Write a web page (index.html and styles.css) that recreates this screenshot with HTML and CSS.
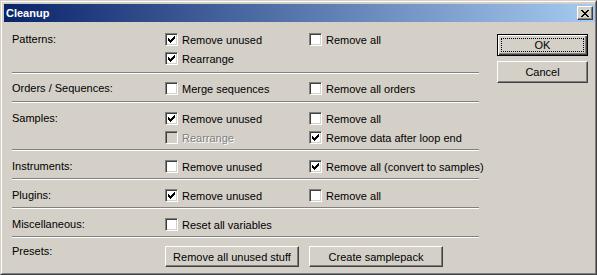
FILE: index.html
```html
<!DOCTYPE html>
<html lang="en">
<head>
    <meta charset="UTF-8">
    <title>Cleanup</title>
    <link rel="stylesheet" href="styles.css">
</head>
<body>
    <div class="window">
        <div class="frame">
            <div class="titlebar">
                <span class="title">Cleanup</span>
                <span class="close">
                    <svg width="8" height="7" viewBox="0 0 8 7" shape-rendering="crispEdges"><path d="M0 0h2v1H0zM6 0h2v1H6zM1 1h2v1H1zM5 1h2v1H5zM2 2h4v1H2zM3 3h2v1H3zM2 4h4v1H2zM1 5h2v1H1zM5 5h2v1H5zM0 6h2v1H0zM6 6h2v1H6z" fill="#000"/></svg>
                </span>
            </div>
            <div class="client">
                <div class="options">
                    <div class="section first">
                        <div class="label">Patterns:</div>
                        <div class="opts">
                            <div class="opt"><span class="cb on"></span>Remove unused</div>
                            <div class="opt"><span class="cb"></span>Remove all</div>
                            <div class="opt"><span class="cb on"></span>Rearrange</div>
                        </div>
                    </div>
                    <hr class="sep">
                    <div class="section orders">
                        <div class="label">Orders / Sequences:</div>
                        <div class="opts">
                            <div class="opt"><span class="cb"></span>Merge sequences</div>
                            <div class="opt"><span class="cb"></span>Remove all orders</div>
                        </div>
                    </div>
                    <hr class="sep">
                    <div class="section">
                        <div class="label">Samples:</div>
                        <div class="opts">
                            <div class="opt"><span class="cb on"></span>Remove unused</div>
                            <div class="opt"><span class="cb"></span>Remove all</div>
                            <div class="opt disabled"><span class="cb"></span>Rearrange</div>
                            <div class="opt"><span class="cb on"></span>Remove data after loop end</div>
                        </div>
                    </div>
                    <hr class="sep">
                    <div class="section">
                        <div class="label">Instruments:</div>
                        <div class="opts">
                            <div class="opt"><span class="cb"></span>Remove unused</div>
                            <div class="opt"><span class="cb on"></span>Remove all (convert to samples)</div>
                        </div>
                    </div>
                    <hr class="sep">
                    <div class="section">
                        <div class="label">Plugins:</div>
                        <div class="opts">
                            <div class="opt"><span class="cb on"></span>Remove unused</div>
                            <div class="opt"><span class="cb"></span>Remove all</div>
                        </div>
                    </div>
                    <hr class="sep">
                    <div class="section">
                        <div class="label">Miscellaneous:</div>
                        <div class="opts">
                            <div class="opt"><span class="cb"></span>Reset all variables</div>
                        </div>
                    </div>
                    <hr class="sep">
                    <div class="section presets">
                        <div class="label">Presets:</div>
                        <div class="preset-buttons">
                            <button class="btn preset">Remove all unused stuff</button>
                            <button class="btn preset">Create samplepack</button>
                        </div>
                    </div>
                </div>
                <div class="actions">
                    <button class="btn default">OK</button>
                    <button class="btn">Cancel</button>
                </div>
            </div>
        </div>
    </div>
</body>
</html>
```
FILE: styles.css
```css
* {
    box-sizing: border-box;
}
html, body {
    margin: 0;
}
body {
    background: #d4d0c8;
    font-family: 'Liberation Sans', Arial, sans-serif;
    font-size: 11px;
    color: #000;
    overflow: hidden;
}
.window {
    width: 597px;
    height: 275px;
    background: #d4d0c8;
    border: 1px solid;
    border-color: #d4d0c8 #404040 #404040 #d4d0c8;
}
.frame {
    height: 100%;
    border: 1px solid;
    border-color: #fff #808080 #808080 #fff;
    padding: 2px 0 2px 2px;
    display: flex;
    flex-direction: column;
}
.titlebar {
    height: 18px;
    display: flex;
    align-items: center;
    padding: 0 2px;
    background: linear-gradient(90deg, #0a246a, #a6caf0);
}
.title {
    flex: 1;
    color: #fff;
    font-weight: 700;
    font-size: 11px;
}
.close {
    width: 16px;
    height: 14px;
    display: flex;
    align-items: center;
    justify-content: center;
    background: #d4d0c8;
    border: 1px solid;
    border-color: #fff #404040 #404040 #fff;
    box-shadow: inset -1px -1px #808080;
}
.close svg {
    display: block;
    margin-left: -1px;
}
.client {
    flex: 1;
    display: flex;
    margin-top: 1px;
}
.options {
    width: 475px;
    padding: 1px 0 0 8px;
}
.section {
    display: flex;
    padding: 6px 0 2px;
}
.section.first {
    padding-bottom: 4px;
}
.section.orders {
    padding: 5px 0 3px;
}
.section.presets {
    padding-top: 8px;
}
.label {
    width: 153px;
    line-height: 19px;
}
.presets .label {
    margin-top: -4px;
}
.opts {
    display: grid;
    grid-template-columns: 144px 150px;
    grid-auto-rows: 19px;
}
.opt {
    display: flex;
    align-items: center;
    gap: 4px;
    white-space: nowrap;
}
.cb {
    width: 13px;
    height: 13px;
    flex: none;
    background: #fff;
    border: 1px solid;
    border-color: #808080 #fff #fff #808080;
    box-shadow: inset 1px 1px #404040, inset -1px -1px #d4d0c8;
}
.cb.on {
    background: #fff url("data:image/svg+xml,%3Csvg xmlns='http://www.w3.org/2000/svg' width='11' height='11' shape-rendering='crispEdges'%3E%3Cpath d='M2 4h1v3H2zM3 5h1v3H3zM4 6h1v3H4zM5 5h1v3H5zM6 4h1v3H6zM7 3h1v3H7zM8 2h1v3H8z' fill='%23000'/%3E%3C/svg%3E") no-repeat 0 0;
}
.opt.disabled {
    color: #808080;
    text-shadow: 1px 1px #fff;
}
.opt.disabled .cb {
    background: #d4d0c8;
}
.sep {
    margin: 0;
    height: 0;
    border: 0;
    border-top: 1px solid #808080;
    border-bottom: 1px solid #fff;
}
.preset-buttons {
    display: flex;
    gap: 10px;
}
.btn {
    position: relative;
    font-family: 'Liberation Sans', Arial, sans-serif;
    font-size: 11px;
    color: #000;
    background: #d4d0c8;
    border: 1px solid;
    border-color: #fff #404040 #404040 #fff;
    box-shadow: inset -1px -1px #808080;
    padding: 0;
    margin: 0;
}
.btn.preset {
    width: 134px;
    height: 21px;
}
.actions {
    margin-left: 18px;
    padding-top: 11px;
    display: flex;
    flex-direction: column;
    gap: 5px;
}
.actions .btn {
    width: 91px;
    height: 22px;
}
.btn.default {
    border-color: #000;
    box-shadow: inset 1px 1px #fff, inset -1px -1px #404040, inset -2px -2px #808080;
}
.btn.default::after {
    content: '';
    position: absolute;
    left: 3px;
    top: 3px;
    right: 3px;
    bottom: 3px;
    border: 1px dotted #000;
}
```
